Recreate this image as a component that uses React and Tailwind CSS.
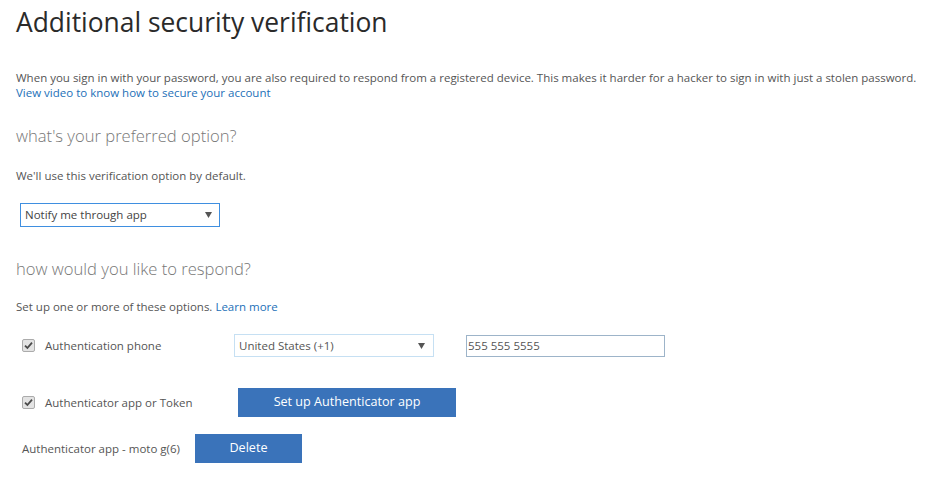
const Check = () => (
  <span className="inline-flex h-[13px] w-[13px] items-center justify-center rounded-[2px] border border-[#ababab] bg-[#e3e3e3]">
    <svg width="9" height="9" viewBox="0 0 9 9">
      <path d="M1 4.6 L3.4 7 L8 1.6" fill="none" stroke="#4a4a4a" strokeWidth="1.8" />
    </svg>
  </span>
)

const Caret = () => (
  <svg width="7" height="6" viewBox="0 0 7 6">
    <path d="M0 0 H7 L3.5 6 Z" fill="#555" />
  </svg>
)

export default function App() {
  return (
    <div className="min-h-[489px] bg-white pl-[16px] text-[11.5px] text-[#555] [font-family:'Open_Sans',sans-serif]">
      {/* TITLE */}
      <h1 className="pt-[3px] text-[26.4px] leading-[38px] text-[#2a2a2a]">
        Additional security verification
      </h1>

      <p className="mt-[29px] leading-[15px]">
        When you sign in with your password, you are also required to respond from a registered device. This makes it harder for a hacker to sign in with just a stolen password.
        <br />
        <a className="text-[#2370b8]">View video to know how to secure your account</a>
      </p>

      {/* PREFERRED OPTION */}
      <h2 className="mt-[24px] text-[16.6px] font-light leading-[24px] text-[#777]">
        what's your preferred option?
      </h2>
      <p className="mt-[20px] leading-[16px]">We'll use this verification option by default.</p>
      <div className="ml-[4px] mt-[19px] flex h-[24px] w-[200px] items-center justify-between border border-[#3f8fe0] pl-[4px] pr-[7px] text-[#444]">
        <span>Notify me through app</span>
        <Caret />
      </div>

      {/* RESPOND */}
      <h2 className="mt-[30px] text-[16.6px] font-light leading-[24px] text-[#777]">
        how would you like to respond?
      </h2>
      <p className="mt-[18px] leading-[16px]">
        Set up one or more of these options. <a className="text-[#2370b8]">Learn more</a>
      </p>

      <div className="mt-[19px] flex items-center pl-[6px]">
        <Check />
        <span className="ml-[10px] w-[189px]">Authentication phone</span>
        <div className="flex h-[23px] w-[200px] items-center justify-between border border-[#c6e0f3] pl-[4px] pr-[8px]">
          <span>United States (+1)</span>
          <Caret />
        </div>
        <div className="ml-[32px] flex h-[22px] w-[199px] items-center border border-[#9db4c9] pl-[1px]">
          555 555 5555
        </div>
      </div>

      <div className="mt-[31px] flex items-center pl-[6px]">
        <Check />
        <span className="ml-[10px] w-[193px]">Authenticator app or Token</span>
        <button className="h-[29px] w-[218px] bg-[#3a73ba] text-[12.6px] text-white">
          Set up Authenticator app
        </button>
      </div>

      <div className="mt-[17px] flex items-center pl-[6px]">
        <span className="w-[173px]">Authenticator app - moto g(6)</span>
        <button className="h-[29px] w-[107px] bg-[#3a73ba] text-[12.6px] text-white">
          Delete
        </button>
      </div>
    </div>
  )
}
